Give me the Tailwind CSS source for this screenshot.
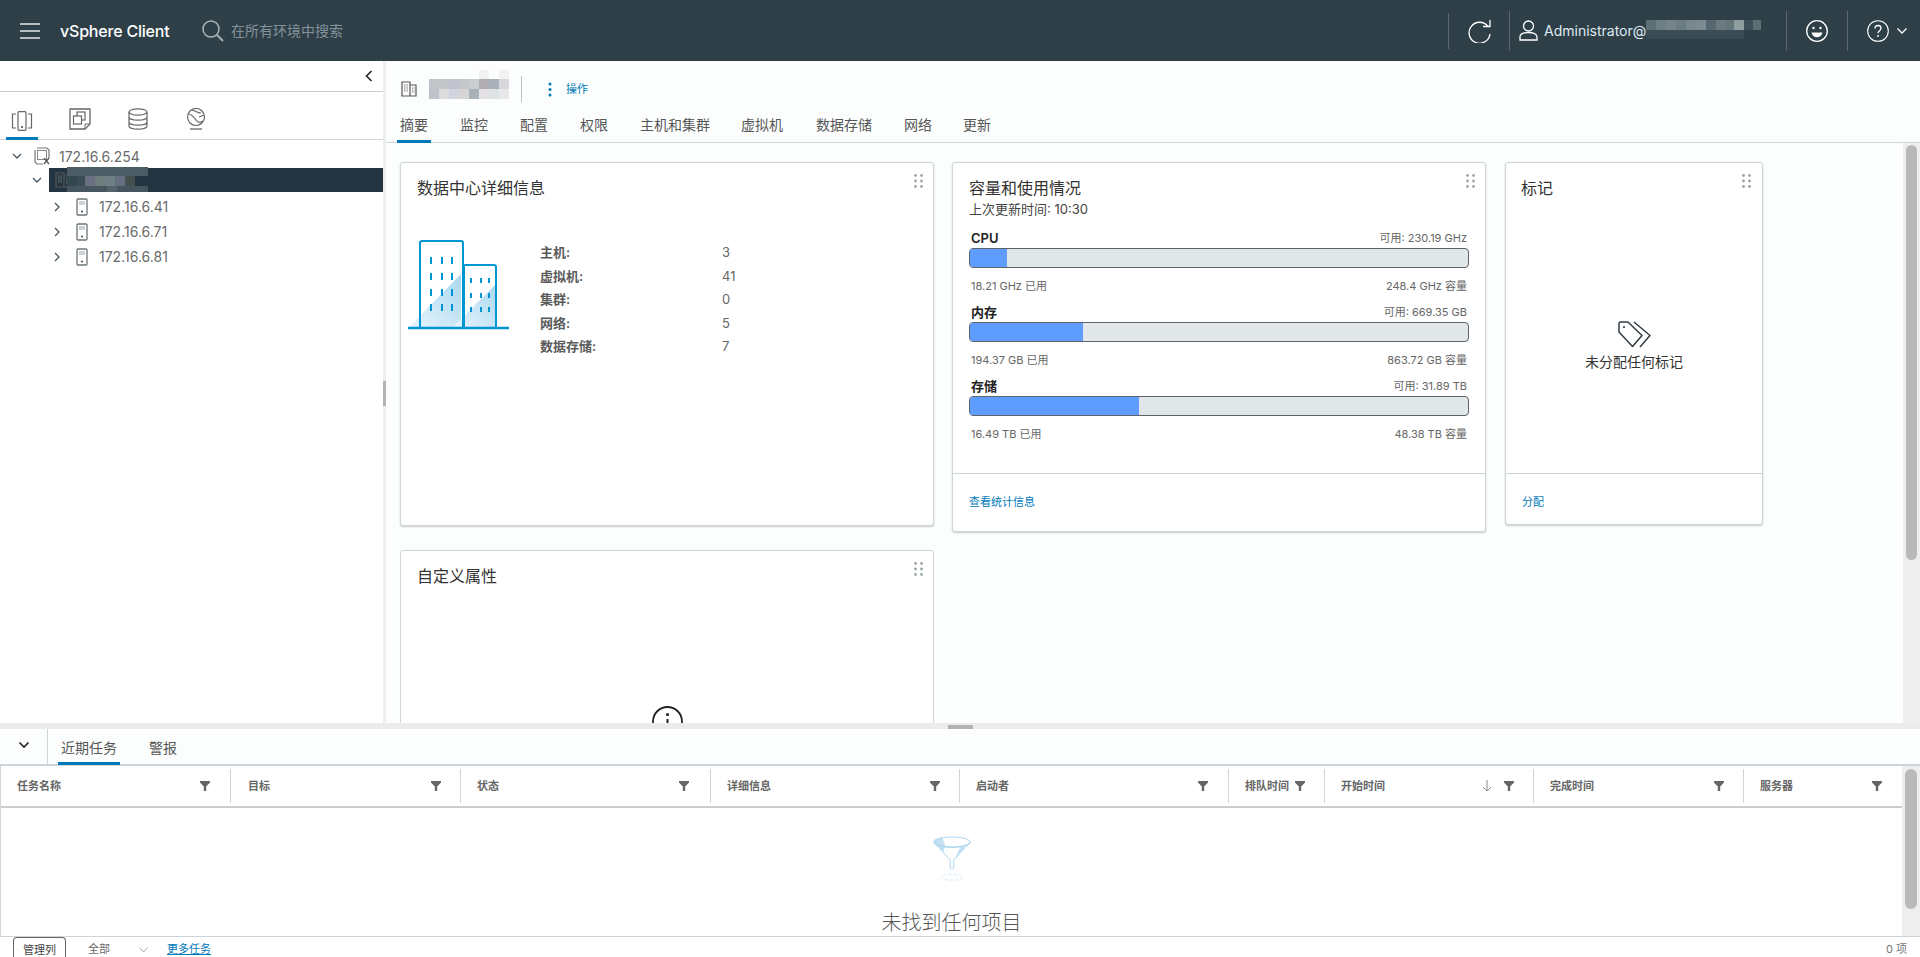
<!DOCTYPE html>
<html lang="zh-CN">
<head>
<meta charset="UTF-8">
<title>vSphere Client</title>
<script src="https://cdn.jsdelivr.net/npm/@tailwindcss/browser@4"></script>
</head>
<body class="w-[1920px] h-[957px] overflow-hidden flex flex-col bg-white text-[#565656] font-[Inter,'Noto_Sans_CJK_SC',sans-serif]">

<!-- shared icons -->
<svg class="hidden">
  <symbol id="dots" viewBox="0 0 9 14"><g fill="#9aa5ab"><circle cx="1.5" cy="1.5" r="1.4"/><circle cx="7.5" cy="1.5" r="1.4"/><circle cx="1.5" cy="7" r="1.4"/><circle cx="7.5" cy="7" r="1.4"/><circle cx="1.5" cy="12.5" r="1.4"/><circle cx="7.5" cy="12.5" r="1.4"/></g></symbol>
  <symbol id="filter" viewBox="0 0 10 10"><path d="M0 0h10v1.5L6.2 5.4V10H3.8V5.4L0 1.5z" fill="#666"/></symbol>
  <symbol id="host" viewBox="0 0 12 18"><rect x="1" y="1" width="10" height="16" rx="1" fill="none" stroke="#6b7478" stroke-width="1.3"/><path d="M3 4h6M3 6h6" stroke="#9aa3a7"/><circle cx="6" cy="13.5" r="1.1" fill="#565656"/></symbol>
  <symbol id="right" viewBox="0 0 8 12"><path d="M2 2l4 4-4 4" fill="none" stroke="#4a5a64" stroke-width="1.3"/></symbol>
  <symbol id="down" viewBox="0 0 12 8"><path d="M2 2l4 4 4-4" fill="none" stroke="#4a5a64" stroke-width="1.3"/></symbol>
  <symbol id="dc" viewBox="0 0 16 16"><path d="M1 1h8v14H1zM9 4h6v11H9z" fill="none" stroke="#565656" stroke-width="1.2"/><path d="M3 4h4M3 6h4M3 8h4M3 10h4M11 7h2.500M11 9h2.500M11 11h2.500" stroke="#7a7a7a" stroke-dasharray="1 .6"/></symbol>
</svg>

<!-- top bar -->
<header class="h-[61px] shrink-0 bg-[#2e3f48] flex items-center text-white">
  <svg class="ml-[20px] w-[20px] h-[16px]" viewBox="0 0 20 16"><path d="M0 1h20M0 8h20M0 15h20" stroke="#e4e7e9" stroke-width="1.6"/></svg>
  <span class="ml-[20px] w-[110px] text-[16px] font-medium tracking-[-0.2px] whitespace-nowrap">vSphere Client</span>
  <svg class="ml-[32px] w-[22px] h-[22px]" viewBox="0 0 22 22"><circle cx="9" cy="9" r="8" fill="none" stroke="#aab5ba" stroke-width="1.5"/><path d="M15 15l6 6" stroke="#aab5ba" stroke-width="1.8"/></svg>
  <span class="ml-[7px] text-[14px] text-[#84939b]">在所有环境中搜索</span>

  <div class="ml-auto w-px h-[36px] bg-[#5b6a72]"></div>
  <svg class="ml-[19px] w-[24px] h-[24px]" viewBox="0 0 24 24"><path d="M20 7.500A10.500 10.500 0 1 0 22 15" fill="none" stroke="#fff" stroke-width="1.3"/><path d="M22 1v6.500h-7" fill="none" stroke="#fff" stroke-width="1.3"/></svg>
  <div class="ml-[17px] w-px h-[40px] bg-[#5b6a72]"></div>
  <svg class="ml-[9px] w-[19px] h-[21px]" viewBox="0 0 19 21"><circle cx="9.500" cy="6" r="5" fill="none" stroke="#fff" stroke-width="1.3"/><path d="M1 20v-3c0-3 4-4.500 8.500-4.500S18 14 18 17v3z" fill="none" stroke="#fff" stroke-width="1.3"/></svg>
  <span class="ml-[6px] w-[102px] text-[14px] text-[#dfeaf2] whitespace-nowrap">Administrator@</span>
  <!-- blurred host name -->
  <svg class="w-[117px] h-[19px] mb-[2px]" viewBox="0 0 117 19" shape-rendering="crispEdges">
    <rect width="10" height="10" fill="#5d6e75"/><rect x="10" width="10" height="10" fill="#6e7e85"/><rect x="20" width="10" height="10" fill="#74848a"/><rect x="30" width="10" height="10" fill="#6c7c84"/><rect x="40" width="10" height="10" fill="#77878c"/><rect x="50" width="10" height="10" fill="#7c8b8f"/><rect x="60" width="10" height="10" fill="#566771"/><rect x="70" width="10" height="10" fill="#6b7a7e"/><rect x="80" width="8" height="10" fill="#65767a"/><rect x="88" width="10" height="10" fill="#8e9d9d"/><rect x="98" width="9" height="10" fill="#3d4f58"/><rect x="107" width="8" height="10" fill="#5d6e75"/>
    <rect y="10" x="0" width="98" height="9" fill="#3a4c55"/>
  </svg>
  <div class="ml-[23px] w-px h-[40px] bg-[#5b6a72]"></div>
  <svg class="ml-[19px] w-[22px] h-[22px]" viewBox="0 0 22 22"><circle cx="11" cy="11" r="10.300" fill="none" stroke="#fff" stroke-width="1.3"/><circle cx="7.500" cy="8" r="1.200" fill="#fff"/><circle cx="14.500" cy="8" r="1.200" fill="#fff"/><path d="M5.500 12.500h11c-.6 3-2.800 4.800-5.500 4.800s-4.900-1.800-5.500-4.800z" fill="#fff"/></svg>
  <div class="ml-[19px] w-px h-[40px] bg-[#5b6a72]"></div>
  <svg class="ml-[19px] w-[22px] h-[22px]" viewBox="0 0 22 22"><circle cx="11" cy="11" r="10.300" fill="none" stroke="#fff" stroke-width="1.100"/><path d="M8 8.500c0-1.800 1.300-3 3-3s3 1.200 3 2.800c0 2.400-3 2.400-3 5" fill="none" stroke="#fff" stroke-width="1.300"/><circle cx="11" cy="16" r=".9" fill="#fff"/></svg>
  <svg class="ml-[8px] mr-[13px] w-[10px] h-[6px]" viewBox="0 0 10 6"><path d="M.5.500L5 5 9.500.500" fill="none" stroke="#fff" stroke-width="1.300"/></svg>
</header>

<!-- middle area -->
<div class="h-[662px] shrink-0 flex">

  <!-- inventory panel -->
  <aside class="w-[383px] shrink-0 bg-white flex flex-col">
    <div class="h-[31px] border-b border-[#cccccc] flex items-center justify-end pr-[10px]">
      <svg class="w-[8px] h-[12px] mb-[1px]" viewBox="0 0 8 12"><path d="M6.500 1L1.500 6l5 5" fill="none" stroke="#222" stroke-width="1.600"/></svg>
    </div>
    <div class="h-[48px] border-b border-[#ccd5da] flex items-end">
      <div class="ml-[6px] w-[32px] h-[48px] -mb-px border-b-[3px] border-[#0079b8] flex justify-center pt-[19px]">
        <svg class="w-[22px] h-[20px]" viewBox="0 0 22 20"><rect x="7" y=".7" width="8" height="18.600" rx="1" fill="none" stroke="#666" stroke-width="1.200"/><path d="M5 3H1.500v14H5M17 3h3.500v14H17" fill="none" stroke="#666" stroke-width="1.200"/><circle cx="11" cy="16" r="1" fill="#444"/></svg>
      </div>
      <svg class="ml-[31px] mb-[9px] w-[22px] h-[22px]" viewBox="0 0 22 22"><path d="M1 1h20v15l-5 5H1z" fill="none" stroke="#666" stroke-width="1.300"/><path d="M16 21v-5h5" fill="none" stroke="#666" stroke-width="1"/><rect x="8" y="4" width="8" height="8" fill="none" stroke="#666" stroke-width="1.200"/><rect x="4.500" y="8" width="8" height="8" fill="#fff" stroke="#666" stroke-width="1.200"/></svg>
      <svg class="ml-[37px] mb-[9px] w-[20px] h-[22px]" viewBox="0 0 20 22"><ellipse cx="10" cy="4" rx="9" ry="3.200" fill="none" stroke="#666" stroke-width="1.200"/><path d="M1 4v14c0 1.800 4 3.200 9 3.200s9-1.400 9-3.200V4M1 9c0 1.800 4 3.200 9 3.200s9-1.400 9-3.200M1 14c0 1.800 4 3.200 9 3.200s9-1.400 9-3.200" fill="none" stroke="#666" stroke-width="1.200"/></svg>
      <svg class="ml-[38px] mb-[9px] w-[20px] h-[22px]" viewBox="0 0 20 22"><circle cx="10" cy="9" r="8.500" fill="none" stroke="#666" stroke-width="1.200"/><path d="M2 6c4 0 6 3 8 6s4 3 7 1M6 2c4 1 5 3 9 3M13 9l5-2" fill="none" stroke="#666" stroke-width="1.200"/><path d="M4 21h12" stroke="#666" stroke-width="1.300"/></svg>
    </div>
    <div class="text-[14px] text-[#6b6b6b] pt-[4px]">
      <div class="h-[24px] flex items-center">
        <svg class="ml-[11px] w-[12px] h-[8px]"><use href="#down"/></svg>
        <svg class="ml-[11px] w-[16px] h-[18px]" viewBox="0 0 16 18"><path d="M3 1h10l2 2v8M1 3v12l2 2h6" fill="none" stroke="#777" stroke-width="1.200"/><rect x="3.500" y="3.500" width="9" height="9" fill="none" stroke="#888"/><path d="M10 11l5 6M15 11l-5 6" stroke="#555" stroke-width="1.300"/></svg>
        <span class="ml-[9px]">172.16.6.254</span>
      </div>
      <div class="h-[24px] flex items-center relative">
        <svg class="ml-[31px] w-[12px] h-[8px]"><use href="#down"/></svg>
        <div class="ml-[6px] flex-1 h-[24px] bg-[#223540] flex items-center pl-[6px]">
          <svg class="w-[16px] h-[16px]"><use href="#dc"/></svg>
        </div>
        <!-- blurred data center name, lies over the row -->
        <svg class="absolute left-[67px] -top-px w-[81px] h-[25px]" viewBox="0 0 81 25" shape-rendering="crispEdges">
          <rect width="81" height="9" fill="#4c5c64"/>
          <rect y="9" width="10" height="10" fill="#33474f"/><rect x="10" y="9" width="8" height="10" fill="#3d4d57"/><rect x="18" y="9" width="10" height="10" fill="#6a7081"/><rect x="28" y="9" width="10" height="10" fill="#6f7c7c"/><rect x="38" y="9" width="10" height="10" fill="#6e7f88"/><rect x="48" y="9" width="10" height="10" fill="#666f80"/><rect x="58" y="9" width="10" height="10" fill="#444f4f"/><rect x="68" y="9" width="13" height="10" fill="#223540"/>
          <rect y="19" width="40" height="6" fill="#46565e"/><rect x="40" y="19" width="10" height="6" fill="#55646c"/><rect x="50" y="19" width="31" height="6" fill="#46565e"/>
        </svg>
      </div>
      <div class="h-[27px] flex items-center mt-[1px]">
        <svg class="ml-[53px] w-[8px] h-[12px]"><use href="#right"/></svg>
        <svg class="ml-[15px] w-[12px] h-[18px]"><use href="#host"/></svg>
        <span class="ml-[11px]">172.16.6.41</span>
      </div>
      <div class="h-[25px] flex items-center -mt-[1px]">
        <svg class="ml-[53px] w-[8px] h-[12px]"><use href="#right"/></svg>
        <svg class="ml-[15px] w-[12px] h-[18px]"><use href="#host"/></svg>
        <span class="ml-[11px]">172.16.6.71</span>
      </div>
      <div class="h-[25px] flex items-center">
        <svg class="ml-[53px] w-[8px] h-[12px]"><use href="#right"/></svg>
        <svg class="ml-[15px] w-[12px] h-[18px]"><use href="#host"/></svg>
        <span class="ml-[11px]">172.16.6.81</span>
      </div>
    </div>
  </aside>

  <!-- splitter -->
  <div class="w-[3px] shrink-0 bg-[#eeeeee] pt-[320px]"><div class="h-[25px] bg-[#b3b3b3]"></div></div>

  <!-- content -->
  <main class="flex-1 min-w-0 flex flex-col bg-[#fcfefe]">
    <div class="h-[44px] shrink-0 flex items-center pl-[15px] pt-[12px]">
      <svg class="w-[16px] h-[16px]"><use href="#dc"/></svg>
      <svg class="ml-[12px] -mt-[10px] w-[80px] h-[29px]" viewBox="0 0 80 29" shape-rendering="crispEdges">
        <rect x="50" width="10" height="9" fill="#f2f2f2"/><rect x="70" width="10" height="9" fill="#f2f2f2"/>
        <rect y="9" width="10" height="10" fill="#c2c6cb"/><rect x="10" y="9" width="10" height="10" fill="#c4c7c9"/><rect x="20" y="9" width="10" height="10" fill="#c0c4cf"/><rect x="30" y="9" width="10" height="10" fill="#c4c8cc"/><rect x="40" y="9" width="10" height="10" fill="#c9ced0"/><rect x="50" y="9" width="10" height="10" fill="#b0adb2"/><rect x="60" y="9" width="10" height="10" fill="#a9b1bb"/><rect x="70" y="9" width="10" height="10" fill="#d8d8dc"/>
        <rect y="19" width="10" height="10" fill="#bec3c9"/><rect x="10" y="19" width="10" height="10" fill="#dcdcdc"/><rect x="20" y="19" width="10" height="10" fill="#d1d3de"/><rect x="30" y="19" width="10" height="10" fill="#d6d4d4"/><rect x="40" y="19" width="10" height="10" fill="#a9b1ba"/><rect x="50" y="19" width="10" height="10" fill="#e5e2e5"/><rect x="60" y="19" width="10" height="10" fill="#dde2e5"/><rect x="70" y="19" width="10" height="10" fill="#e8e8eb"/>
      </svg>
      <div class="ml-[12px] w-px h-[26px] bg-[#b9c2c6]"></div>
      <svg class="ml-[26px] w-[4px] h-[15px]" viewBox="0 0 4 15"><g fill="#0079b8"><circle cx="2" cy="2" r="1.500"/><circle cx="2" cy="7.500" r="1.500"/><circle cx="2" cy="13" r="1.500"/></g></svg>
      <span class="ml-[14px] text-[11px] text-[#0079b8]">操作</span>
    </div>
    <nav class="h-[38px] shrink-0 border-b-[1px] border-[#ccd5da] flex items-end text-[14px] text-[#565656] pl-[11px]">
      <span class="w-[34px] h-[38px] -mb-px border-b-[3px] border-[#0079b8] text-center leading-[40px]">摘要</span>
      <span class="ml-[29px] h-[36px] leading-[38px]">监控</span>
      <span class="ml-[32px] h-[36px] leading-[38px]">配置</span>
      <span class="ml-[32px] h-[36px] leading-[38px]">权限</span>
      <span class="ml-[32px] h-[36px] leading-[38px]">主机和集群</span>
      <span class="ml-[31px] h-[36px] leading-[38px]">虚拟机</span>
      <span class="ml-[33px] h-[36px] leading-[38px]">数据存储</span>
      <span class="ml-[32px] h-[36px] leading-[38px]">网络</span>
      <span class="ml-[31px] h-[36px] leading-[38px]">更新</span>
    </nav>

    <div class="flex-1 min-h-0 flex overflow-hidden">
      <div class="w-[1517px] flex items-start pl-[14px] pt-[19px]">
        <div class="w-[1379px] flex flex-wrap items-start gap-y-[18px]">

          <!-- data center details -->
          <section class="relative w-[534px] h-[364px] bg-white border border-[#ccd5da] rounded-[3px] shadow-[0_1px_2px_rgba(0,0,0,0.2)]">
            <svg class="absolute right-[10px] top-[11px] w-[9px] h-[14px]"><use href="#dots"/></svg>
            <h2 class="pl-[16px] pt-[14px] text-[16px] leading-[22px] text-[#333]">数据中心详细信息</h2>
            <div class="flex pl-[7px] pt-[41px]">
              <svg class="w-[101px] h-[90px]" viewBox="0 0 101 90">
                <defs><linearGradient id="g1" x1="0" y1="1" x2="1" y2="0"><stop offset="0" stop-color="#eaf5fb"/><stop offset="1" stop-color="#a8d7f0"/></linearGradient></defs>
                <path d="M0 88L53 34v54z" fill="url(#g1)"/><path d="M44 88l44-44v44z" fill="url(#g1)"/>
                <path d="M12 88V3a2 2 0 0 1 2-2h39a2 2 0 0 1 2 2v85M56 88V25h30a2 2 0 0 1 2 2v61" fill="none" stroke="#0095d3" stroke-width="2"/>
                <path d="M0 88h101" stroke="#0095d3" stroke-width="2.500"/>
                <path d="M23 17v7M34 17v7M44 17v7M23 33v7M34 33v7M44 33v7M23 49v7M34 49v7M44 49v7M23 64v7M34 64v7M44 64v7M63 38v5M73 38v5M81 38v5M63 53v5M73 53v5M81 53v5M63 67v5M73 67v5M81 67v5" stroke="#0095d3" stroke-width="2"/>
              </svg>
              <dl class="ml-[31px] -mt-[0px] grid grid-cols-[182px_auto] text-[13px] leading-[23.500px] self-start pt-[1px]">
                <dt class="font-semibold text-[#5a5a5a]">主机:</dt><dd class="text-[#666]">3</dd>
                <dt class="font-semibold text-[#5a5a5a]">虚拟机:</dt><dd class="text-[#666]">41</dd>
                <dt class="font-semibold text-[#5a5a5a]">集群:</dt><dd class="text-[#666]">0</dd>
                <dt class="font-semibold text-[#5a5a5a]">网络:</dt><dd class="text-[#666]">5</dd>
                <dt class="font-semibold text-[#5a5a5a]">数据存储:</dt><dd class="text-[#666]">7</dd>
              </dl>
            </div>
          </section>

          <!-- capacity and usage -->
          <section class="relative ml-[18px] w-[534px] h-[370px] bg-white border border-[#ccd5da] rounded-[3px] shadow-[0_1px_2px_rgba(0,0,0,0.2)] flex flex-col">
            <svg class="absolute right-[10px] top-[11px] w-[9px] h-[14px]"><use href="#dots"/></svg>
            <div class="flex-1 px-[16px] pt-[14px]">
              <h2 class="text-[16px] leading-[22px] text-[#333]">容量和使用情况</h2>
              <p class="text-[13px] leading-[18px] mt-[1px] text-[#444]">上次更新时间: 10:30</p>

              <div class="flex justify-between items-end mt-[11px] h-[18px] pl-[2px] pr-[2px] leading-[18px]">
                <span class="text-[13px] font-semibold text-[#222]">CPU</span><span class="text-[11px] text-[#666]">可用: 230.19 GHz</span>
              </div>
              <div class="h-[20px] mt-px border border-[#5c6469] rounded-[4px] bg-[#e1e6e9] overflow-hidden"><div class="h-full bg-[#5f9cff]" style="width:7.4%"></div></div>
              <div class="flex justify-between mt-[9px] h-[18px] leading-[18px] text-[11px] text-[#666] pl-[2px] pr-[2px]"><span>18.21 GHz 已用</span><span>248.4 GHz 容量</span></div>

              <div class="flex justify-between items-end mt-[8px] h-[18px] pl-[2px] pr-[2px] leading-[18px]">
                <span class="text-[13px] font-semibold text-[#222]">内存</span><span class="text-[11px] text-[#666]">可用: 669.35 GB</span>
              </div>
              <div class="h-[20px] mt-px border border-[#5c6469] rounded-[4px] bg-[#e1e6e9] overflow-hidden"><div class="h-full bg-[#5f9cff]" style="width:22.6%"></div></div>
              <div class="flex justify-between mt-[9px] h-[18px] leading-[18px] text-[11px] text-[#666] pl-[2px] pr-[2px]"><span>194.37 GB 已用</span><span>863.72 GB 容量</span></div>

              <div class="flex justify-between items-end mt-[8px] h-[18px] pl-[2px] pr-[2px] leading-[18px]">
                <span class="text-[13px] font-semibold text-[#222]">存储</span><span class="text-[11px] text-[#666]">可用: 31.89 TB</span>
              </div>
              <div class="h-[20px] mt-px border border-[#5c6469] rounded-[4px] bg-[#e1e6e9] overflow-hidden"><div class="h-full bg-[#5f9cff]" style="width:34%"></div></div>
              <div class="flex justify-between mt-[9px] h-[18px] leading-[18px] text-[11px] text-[#666] pl-[2px] pr-[2px]"><span>16.49 TB 已用</span><span>48.38 TB 容量</span></div>
            </div>
            <div class="h-[58px] shrink-0 border-t border-[#ccd5da] pl-[16px] leading-[57px] text-[11px] text-[#0079b8]">查看统计信息</div>
          </section>

          <!-- tags -->
          <section class="relative ml-[19px] w-[258px] h-[363px] bg-white border border-[#ccd5da] rounded-[3px] shadow-[0_1px_2px_rgba(0,0,0,0.2)] flex flex-col">
            <svg class="absolute right-[11px] top-[11px] w-[9px] h-[14px]"><use href="#dots"/></svg>
            <h2 class="pl-[15px] pt-[14px] text-[16px] leading-[22px] text-[#333]">标记</h2>
            <div class="flex-1 flex flex-col items-center pt-[122px]">
              <svg class="w-[33px] h-[27px]" viewBox="0 0 33 27"><path d="M1 2.500A1.500 1.500 0 0 1 2.500 1h7.500l14 13.500-9.500 11L1 11z" fill="none" stroke="#313c42" stroke-width="1.500" stroke-linejoin="round"/><path d="M16 1l16 13.500-10 11.500" fill="none" stroke="#313c42" stroke-width="1.500" stroke-linejoin="round"/><circle cx="6" cy="6" r="1.100" fill="#313c42"/></svg>
              <p class="mt-[4px] text-[14px] leading-[20px] text-[#333]">未分配任何标记</p>
            </div>
            <div class="h-[51px] shrink-0 border-t border-[#ccd5da] pl-[16px] leading-[57px] text-[11px] text-[#0079b8]">分配</div>
          </section>

          <!-- custom attributes -->
          <section class="relative w-[534px] h-[300px] bg-white border border-[#ccd5da] rounded-[3px]">
            <svg class="absolute right-[10px] top-[11px] w-[9px] h-[14px]"><use href="#dots"/></svg>
            <h2 class="pl-[16px] pt-[14px] text-[16px] leading-[22px] text-[#333]">自定义属性</h2>
            <svg class="mx-auto mt-[119px] w-[31px] h-[31px]" viewBox="0 0 31 31"><circle cx="15.500" cy="15.500" r="14.500" fill="none" stroke="#222" stroke-width="1.800"/><circle cx="15.500" cy="8.500" r="1.600" fill="#222"/><path d="M15.500 13v10" stroke="#222" stroke-width="2"/></svg>
          </section>
        </div>
      </div>
      <div class="w-[17px] shrink-0 bg-[#eeeeee] ml-auto pl-[3px] pt-[2px]"><div class="w-[11px] h-[415px] rounded-full bg-[#b9b9b9]"></div></div>
    </div>
  </main>
</div>

<!-- drag strip -->
<div class="h-[6px] shrink-0 bg-[#ececec] flex justify-center items-end"><div class="w-[25px] h-[4px] bg-[#b3b3b3]"></div></div>

<!-- recent tasks -->
<section class="flex-1 min-h-0 flex flex-col bg-[#fcfefe]">
  <div class="h-[37px] shrink-0 flex border-b-[2px] border-[#ccd5da]">
    <div class="w-[48px] h-[35px] border-r border-[#ccd5da] flex items-center justify-center">
      <svg class="w-[12px] h-[8px] mb-[3px]" viewBox="0 0 12 8"><path d="M1.500 1.500L6 6l4.500-4.500" fill="none" stroke="#222" stroke-width="1.600"/></svg>
    </div>
    <span class="ml-[10px] w-[62px] h-[36px] border-b-[3px] border-[#0079b8] text-center text-[14px] leading-[38px] text-[#565656]">近期任务</span>
    <span class="ml-[29px] text-[14px] leading-[38px] text-[#565656]">警报</span>
  </div>

  <div class="h-[170px] shrink-0 flex">
    <div class="w-[1902px] border-l border-[#ccd5da] bg-white flex flex-col">
      <div class="h-[42px] shrink-0 border-b-[2px] border-[#cccccc] flex items-center text-[11px] font-semibold text-[#666] leading-[16px]">
        <div class="w-[229px] h-[34px] flex items-center justify-between pl-[16px] pr-[20px]"><span>任务名称</span><svg class="w-[10px] h-[10px]"><use href="#filter"/></svg></div>
        <div class="w-[230px] h-[34px] border-l border-[#ccd5da] flex items-center justify-between pl-[17px] pr-[19px]"><span>目标</span><svg class="w-[10px] h-[10px]"><use href="#filter"/></svg></div>
        <div class="w-[250px] h-[34px] border-l border-[#ccd5da] flex items-center justify-between pl-[16px] pr-[21px]"><span>状态</span><svg class="w-[10px] h-[10px]"><use href="#filter"/></svg></div>
        <div class="w-[249px] h-[34px] border-l border-[#ccd5da] flex items-center justify-between pl-[16px] pr-[19px]"><span>详细信息</span><svg class="w-[10px] h-[10px]"><use href="#filter"/></svg></div>
        <div class="w-[269px] h-[34px] border-l border-[#ccd5da] flex items-center justify-between pl-[16px] pr-[20px]"><span>启动者</span><svg class="w-[10px] h-[10px]"><use href="#filter"/></svg></div>
        <div class="w-[96px] h-[34px] border-l border-[#ccd5da] flex items-center justify-between pl-[16px] pr-[19px]"><span class="w-[44px]">排队时间</span><svg class="w-[10px] h-[10px]"><use href="#filter"/></svg></div>
        <div class="w-[209px] h-[34px] border-l border-[#ccd5da] flex items-center pl-[16px] pr-[19px]"><span class="mr-auto">开始时间</span><svg class="w-[10px] h-[12px] mr-[12px]" viewBox="0 0 10 12"><path d="M5 0v11M1 7l4 4 4-4" fill="none" stroke="#888" stroke-width="1"/></svg><svg class="w-[10px] h-[10px]"><use href="#filter"/></svg></div>
        <div class="w-[210px] h-[34px] border-l border-[#ccd5da] flex items-center justify-between pl-[16px] pr-[19px]"><span>完成时间</span><svg class="w-[10px] h-[10px]"><use href="#filter"/></svg></div>
        <div class="flex-1 h-[34px] border-l border-[#ccd5da] flex items-center justify-between pl-[16px] pr-[20px]"><span>服务器</span><svg class="w-[10px] h-[10px]"><use href="#filter"/></svg></div>
      </div>
      <div class="flex-1 min-h-0 overflow-hidden flex flex-col items-center pt-[28px]">
        <svg class="w-[44px] h-[52px]" viewBox="0 0 44 52">
          <path d="M1 7a21 6 0 0 0 42 0L24 28v9l-2 1.500-2-1V28z" fill="#fff" stroke="#9fd1ee"/>
          <path d="M1 6L12 19 14 11 11 2C5 3 1 4 1 6z" fill="#c3e0f3"/><path d="M32 12L25 27 37 13z" fill="#c3e0f3"/>
          <ellipse cx="22" cy="7" rx="21" ry="6" fill="none" stroke="#9fd1ee"/>
          <ellipse cx="22" cy="47.500" rx="12.500" ry="3.500" fill="none" stroke="#cfe6f5" stroke-dasharray="4 2"/>
        </svg>
        <p class="mt-[29px] text-[20px] leading-[26px] font-light text-[#565656] whitespace-nowrap">未找到任何项目</p>
      </div>
    </div>
    <div class="flex-1 bg-[#eeeeee] pl-[3px] pt-[3px]"><div class="w-[12px] h-[140px] rounded-full bg-[#b9b9b9]"></div></div>
  </div>

  <footer class="flex-1 min-h-0 bg-white border-t border-[#ccd5da] flex items-start text-[11px] leading-[20px]">
    <span class="ml-[13px] w-[53px] h-[22px] border border-b-0 border-[#666] rounded-t-[4px] text-center text-[#444] leading-[24px]">管理列</span>
    <span class="ml-[22px] leading-[24px] text-[#666]">全部</span>
    <svg class="ml-[29px] mt-[10px] w-[9px] h-[6px]" viewBox="0 0 9 6"><path d="M.5.500L4.500 5l4-4.500" fill="none" stroke="#aaa"/></svg>
    <span class="ml-[19px] leading-[24px] text-[#0079b8] underline">更多任务</span>
    <span class="ml-auto mr-[13px] leading-[24px] text-[#777]">0 项</span>
  </footer>
</section>

</body>
</html>
